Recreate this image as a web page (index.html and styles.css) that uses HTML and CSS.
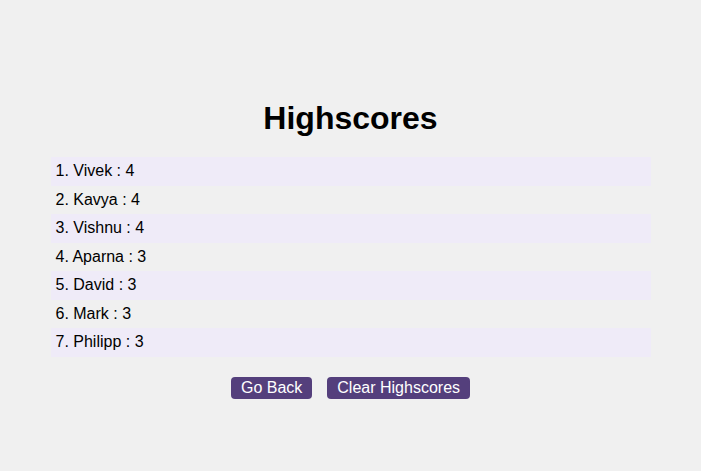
FILE: index.html
```html
<!DOCTYPE html>
<html>
<head>
<meta charset="utf-8">
<link rel="stylesheet" href="styles.css">
</head>
<body>
<main class="page">
  <h1 class="title">Highscores</h1>
  <ol class="scores">
    <li class="score">1. Vivek : 4</li>
    <li class="score">2. Kavya : 4</li>
    <li class="score">3. Vishnu : 4</li>
    <li class="score">4. Aparna : 3</li>
    <li class="score">5. David : 3</li>
    <li class="score">6. Mark : 3</li>
    <li class="score">7. Philipp : 3</li>
  </ol>
  <div class="actions">
    <button class="btn">Go Back</button>
    <button class="btn">Clear Highscores</button>
  </div>
</main>
</body>
</html>
```

FILE: styles.css
```css
html, body {
  margin: 0;
  padding: 0;
  background: #f0f0f0;
  font-family: "Liberation Sans", Arial, sans-serif;
  color: #000;
}
.page {
  width: 600px;
  margin: 0 auto;
  padding-top: 79px;
  display: flex;
  flex-direction: column;
}
.title {
  font-size: 32px;
  font-weight: bold;
  text-align: center;
  margin: 21px 0 20px;
  line-height: 37px;
}
.scores {
  list-style: none;
  margin: 0;
  padding: 0;
}
.score {
  font-size: 16px;
  line-height: 18.5px;
  padding: 5px 5px;
}
.score:nth-child(odd) {
  background: #efebf8;
}
.actions {
  display: flex;
  justify-content: center;
  gap: 15px;
  margin-top: 20px;
}
.btn {
  font-family: "Liberation Sans", Arial, sans-serif;
  font-size: 16px;
  line-height: 18px;
  color: #fff;
  background: #543f7c;
  border: none;
  border-radius: 4px;
  padding: 2px 10px;
}
```
